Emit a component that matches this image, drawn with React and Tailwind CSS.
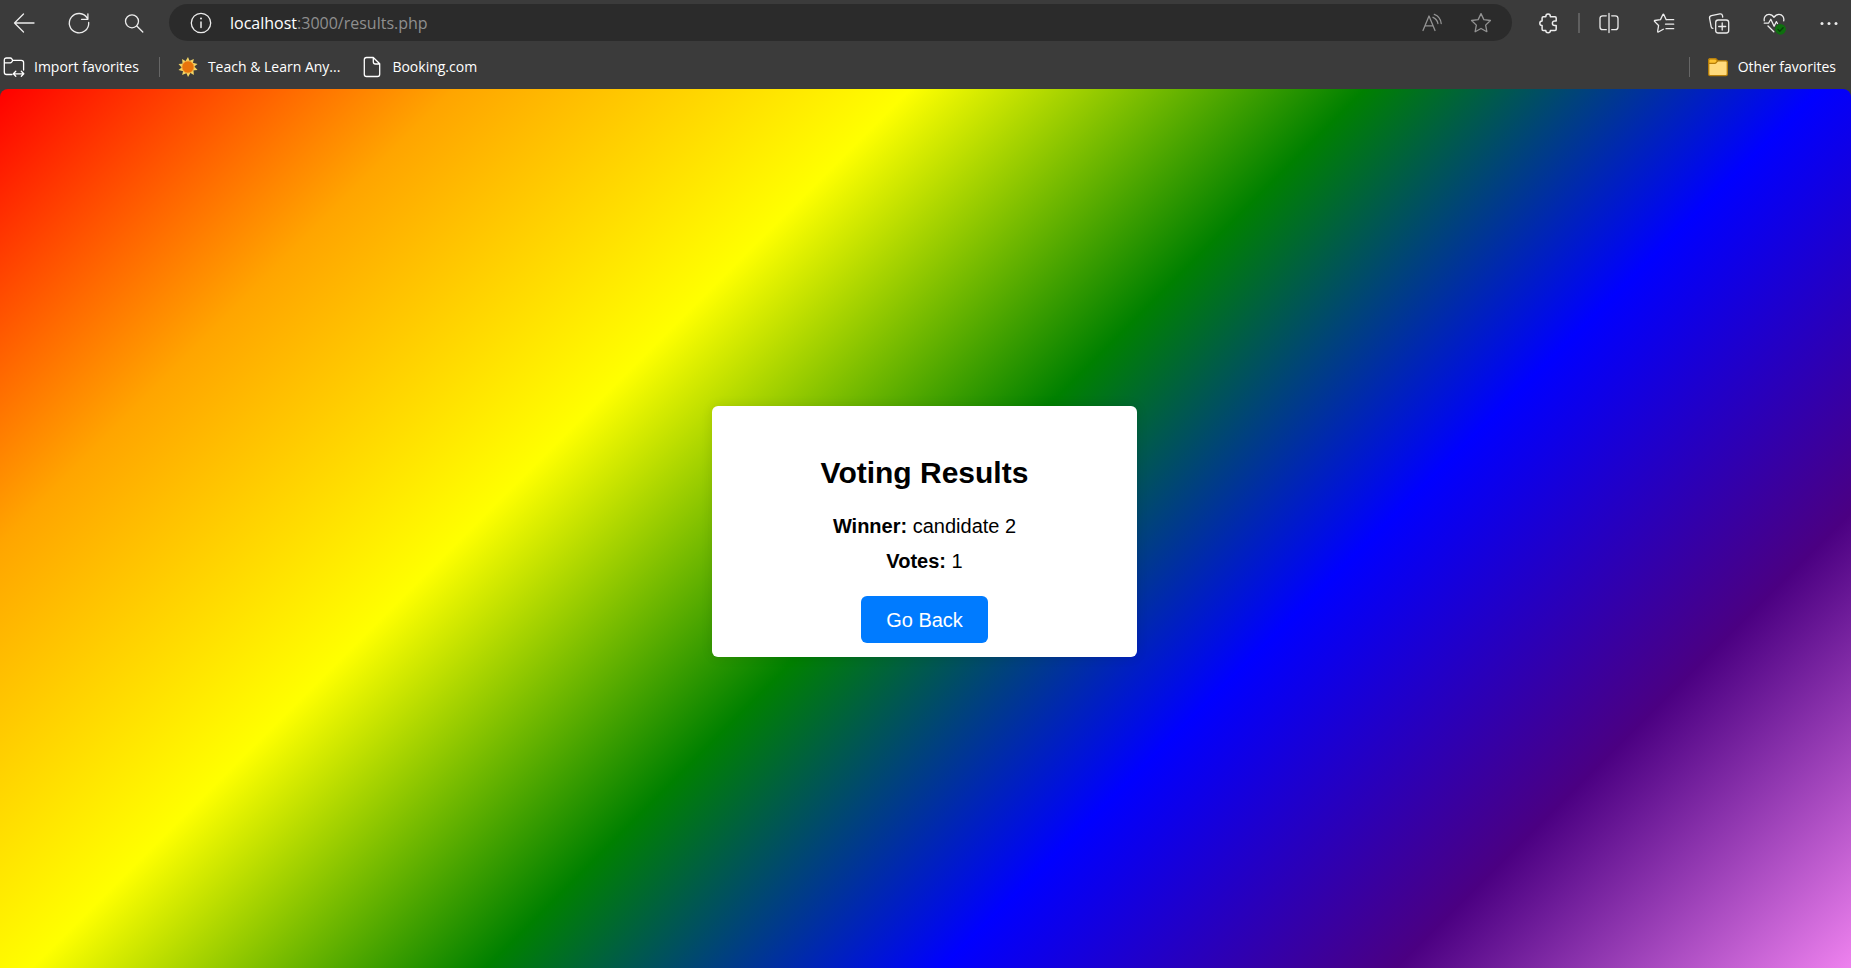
import React from "react";

function Icon({ children, className = "" }) {
  return (
    <svg
      viewBox="0 0 24 24"
      className={`h-6 w-6 shrink-0 ${className}`}
      fill="none"
      stroke="currentColor"
      strokeWidth="1.3"
      strokeLinecap="round"
      strokeLinejoin="round"
      aria-hidden="true"
    >
      {children}
    </svg>
  );
}

function ToolButton({ label, children, className = "w-11" }) {
  return (
    <button type="button" aria-label={label} className={`flex h-9 items-center justify-center ${className}`}>
      <Icon>{children}</Icon>
    </button>
  );
}

function Bookmark({ icon, children }) {
  return (
    <a href="#" className="flex items-center gap-2 whitespace-nowrap text-white">
      {icon}
      <span className="pb-0.5">{children}</span>
    </a>
  );
}

const sunRays = Array.from({ length: 10 }, (_, i) => i * 36);

function AddressBar() {
  return (
    <div className="ml-3 flex h-[37px] min-w-0 flex-1 items-center rounded-full bg-[#2b2b2b] pl-5 pr-[19px]">
      <button type="button" aria-label="Site information">
        <Icon>
          <circle cx="12" cy="12" r="9.7" />
          <path d="M12 11v5.5" strokeWidth="1.5" />
          <circle cx="12" cy="7.6" r="1" fill="currentColor" stroke="none" />
        </Icon>
      </button>
      <a href="#" aria-label="Address" className="ml-[17px] min-w-0 flex-1 truncate text-base text-[#8f8f8f]">
        <span className="text-white">localhost</span>:3000/results.php
      </a>
      <div className="flex items-center gap-[25px] text-[#939393]">
        <button type="button" aria-label="Read aloud">
          <Icon>
            <path d="M3 19.5 9 5l6 14.5M5 14.8h8" />
            <path d="M13 6.3c2.700 1.300 4.500 3.300 4.900 6.200M14.300 3.300c4 1.500 6.500 4.900 6.900 9.200" />
          </Icon>
        </button>
        <button type="button" aria-label="Add to favorites">
          <Icon>
            <path d="m12 2.600 2.850 6 6.600.9-4.800 4.600 1.200 6.600L12 17.500l-5.850 3.200 1.200-6.600-4.800-4.600 6.600-.9z" />
          </Icon>
        </button>
      </div>
    </div>
  );
}

function Toolbar() {
  return (
    <div className="flex h-[45px] items-center">
      <nav aria-label="Navigation" className="flex items-center gap-2">
        <ToolButton label="Back" className="w-[47px]">
          <path d="M2.500 12H22M11.500 3l-9 9 9 9" />
        </ToolButton>
        <ToolButton label="Refresh" className="w-[47px]">
          <path d="M21.700 11.500a9.700 9.700 0 1 1-1.300-4.200M20.900 2.800v5.500h-6.400" />
        </ToolButton>
        <ToolButton label="Search" className="w-[47px]">
          <circle cx="10" cy="10.300" r="6.500" />
          <path d="m14.800 15 6 6" />
        </ToolButton>
      </nav>
      <AddressBar />
      <div className="ml-3.5 flex items-center">
        <ToolButton label="Extensions">
          <path d="M7.300 5.700h2.500a2.300 2.600 0 0 1 4.600 0H19c.8 0 1.200.4 1.200 1.200v3h-1.500a2.300 2.300 0 0 0 0 4.600h1.500v3.800c0 .8-.4 1.200-1.200 1.200h-4.600a2.300 2.300 0 0 1-4.600 0H7.300c-.8 0-1.200-.4-1.200-1.200v-3.800a2.300 2.300 0 0 1 0-4.600v-3c0-.8.4-1.200 1.200-1.200z" strokeWidth="1.500" />
        </ToolButton>
        <span className="ml-2 mr-[7px] h-5 w-0.5 bg-[#5f5f5f]" />
        <div className="flex items-center gap-[11px]">
          <ToolButton label="Split screen">
            <path d="M12 2.500v19M9.300 4.800H5.700c-1.600 0-2.700 1.100-2.700 2.700v8.500c0 1.600 1.100 2.700 2.700 2.700h3.600M14.700 4.800h3.600c1.600 0 2.700 1.100 2.700 2.700v8.500c0 1.600-1.100 2.700-2.700 2.700h-3.600" />
          </ToolButton>
          <ToolButton label="Favorites">
            <path d="M14.200 8.700 11.800 3.500c-.2-.4-.7-.4-.9 0L8.500 8.600l-5.700.9c-.5.100-.6.600-.3.900l4.100 4.100-1 5.900c-.1.500.4.800.8.600l4.900-2.700M14.200 8.700h7.500M13.500 13.200h8.200M14 17.700h7.700" />
          </ToolButton>
          <ToolButton label="Collections">
            <rect x="8.700" y="9" width="13" height="13" rx="2.500" />
            <path d="M15.200 12v7M11.700 15.500h7M5.900 17.300c-.9-.1-1.500-.6-1.700-1.500L2.600 7.500c-.3-1.400.4-2.500 1.800-2.900l8.500-1.700c1.400-.2 2.300.4 2.600 1.700l.2 1.500" />
          </ToolButton>
          <ToolButton label="Browser essentials">
            <path d="M2.300 9.800c-.7-3 1.300-6.500 4.700-6.500 2.100 0 3.800 1.200 5 3 1.200-1.800 2.900-3 5-3 3.400 0 5.400 3.500 4.700 6.500M2.300 12.200h4.200l2.300-4 3.300 7 2.200-4.500 1.200 1.800M6 15l5.800 5.800" />
            <circle cx="18.500" cy="18.300" r="5.400" fill="#0e6f0e" stroke="none" />
            <path d="m16 18.500 1.800 1.800 3.300-3.500" stroke="#083f08" />
          </ToolButton>
          <ToolButton label="Settings and more">
            <g fill="currentColor" stroke="none">
              <circle cx="5" cy="12.500" r="1.500" />
              <circle cx="12" cy="12.500" r="1.500" />
              <circle cx="19" cy="12.500" r="1.500" />
            </g>
          </ToolButton>
        </div>
      </div>
    </div>
  );
}

function BookmarksBar() {
  return (
    <div className="flex h-11 items-center pl-0.5 pr-[15px] text-[14px]">
      <Bookmark
        icon={
          <Icon>
            <path d="M10 19.500H4.500c-1.300 0-2.200-.9-2.200-2.200V5.200c0-1.400.8-2.200 2.200-2.200h3.800c.7 0 1.100.2 1.500.8l1 1.500h8.500c1.400 0 2.300.9 2.300 2.200v7.500M2.300 7.800h5.900c.7 0 1-.2 1.400-.7l1.200-1.700" />
            <path d="M11.500 18.800h10M13.800 16.300l-2.500 2.500 2.500 2.500M19.300 16.300l2.500 2.500-2.500 2.500" />
          </Icon>
        }
      >
        Import favorites
      </Bookmark>
      <span className="ml-5 mr-4 h-5 w-px bg-[#666666]" />
      <Bookmark
        icon={
          <Icon>
            {sunRays.map((angle) => (
              <path key={angle} d="M9 7 12 2l2 5z" fill="#f3d565" stroke="none" transform={`rotate(${angle} 12 12)`} />
            ))}
            <circle cx="12" cy="12" r="6" fill="#e8740c" stroke="#f0a63a" strokeWidth="0.800" />
          </Icon>
        }
      >
        Teach &amp; Learn Any...
      </Bookmark>
      <span className="w-5" />
      <Bookmark
        icon={
          <Icon>
            <path d="M6.500 2.500h6.800l6.400 6.300v10.400c0 1.400-.8 2.300-2.200 2.300h-11c-1.400 0-2.200-.9-2.200-2.300V4.800c0-1.400.8-2.300 2.200-2.300zM13.300 2.800v4c0 1.400.7 2.200 2.200 2.200h4" />
          </Icon>
        }
      >
        Booking.com
      </Bookmark>
      <span className="ml-auto mr-4 h-5 w-px bg-[#666666]" />
      <Bookmark
        icon={
          <Icon>
            <path d="M2.700 5.200c0-.9.500-1.400 1.400-1.400h5.500l2 2h8.300c.9 0 1.400.5 1.400 1.400v12c0 .9-.5 1.400-1.400 1.400H4.100c-.9 0-1.400-.5-1.400-1.400z" fill="#ffda7c" stroke="#b67d08" />
            <path d="M2.700 8.300V5.200c0-.9.500-1.400 1.400-1.400h5.500l2 2-1.600 2c-.3.300-.6.500-1 .5z" fill="#fdc22f" stroke="#b67d08" />
          </Icon>
        }
      >
        Other favorites
      </Bookmark>
    </div>
  );
}

export default function App() {
  return (
    <div className="flex min-h-screen flex-col bg-[#3b3b3b] font-['Open_Sans',sans-serif] text-[#ececec]">
      <header>
        <Toolbar />
        <BookmarksBar />
      </header>
      <main className="flex flex-1 items-center justify-center rounded-t-lg bg-[linear-gradient(135deg,red,orange,yellow,green,blue,indigo,violet)] pr-0.5 pt-1.5 font-['Liberation_Sans',Arial,sans-serif] text-black">
        <section className="flex w-[425px] flex-col items-center rounded-md bg-white pb-3.5 pt-[49px] text-center text-xl shadow-[0_0_12px_rgba(0,0,0,0.1)]">
          <h1 className="text-[30px] font-bold leading-9">Voting Results</h1>
          <div className="mt-[18px] leading-[35px]">
            <p>
              <strong>Winner:</strong> candidate 2
            </p>
            <p>
              <strong>Votes:</strong> 1
            </p>
          </div>
          <button type="button" className="mt-[17px] rounded-md bg-[#007bff] px-[25px] pb-[11px] pt-[13px] leading-[23px] text-white">
            Go Back
          </button>
        </section>
      </main>
    </div>
  );
}
